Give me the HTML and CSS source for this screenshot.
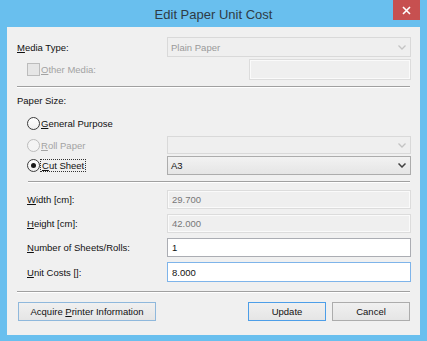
FILE: index.html
```html
<!DOCTYPE html>
<html lang="en">
  <head>
    <meta charset="UTF-8" />
    <title>Edit Paper Unit Cost</title>
    <link rel="stylesheet" href="styles.css">
  </head>
  <body>
    <div class="window">
      <div class="titlebar">
        <span class="title">Edit Paper Unit Cost</span>
        <div class="close">
          <svg width="9" height="9" viewBox="0 0 9 9"><path d="M1 1L8 8M8 1L1 8" stroke="#fff" stroke-width="1.6"/></svg>
        </div>
      </div>
      <div class="client">
        <div class="row r-media">
          <span class="label"><u>M</u>edia Type:</span>
          <div class="combo disabled"><span>Plain Paper</span>
            <svg class="chev" width="8" height="5" viewBox="0 0 8 5"><path d="M0.5 0.5L4 4L7.5 0.5" fill="none" stroke="#c4c4c4" stroke-width="1.3"/></svg>
          </div>
        </div>
        <div class="row r-other">
          <span class="label indent dim"><i class="check"></i><u>O</u>ther Media:</span>
          <div class="box disabled wide-off"></div>
        </div>
        <div class="sep"></div>
        <div class="section">Paper Size:</div>
        <div class="row r-gen">
          <span class="label indent"><i class="radio"></i><u>G</u>eneral Purpose</span>
        </div>
        <div class="row r-roll">
          <span class="label indent dim"><i class="radio off"></i><u>R</u>oll Paper</span>
          <div class="combo disabled"><span></span>
            <svg class="chev" width="8" height="5" viewBox="0 0 8 5"><path d="M0.5 0.5L4 4L7.5 0.5" fill="none" stroke="#c4c4c4" stroke-width="1.3"/></svg>
          </div>
        </div>
        <div class="row r-cut">
          <span class="label indent"><i class="radio on"></i><span class="focus"><u>C</u>ut Sheet</span></span>
          <div class="combo"><span>A3</span>
            <svg class="chev" width="8" height="5" viewBox="0 0 8 5"><path d="M0.5 0.5L4 4L7.5 0.5" fill="none" stroke="#404040" stroke-width="1.5"/></svg>
          </div>
        </div>
        <div class="sep indent-sep"></div>
        <div class="row r-first">
          <span class="label indent"><u>W</u>idth [cm]:</span>
          <div class="box disabled">29.700</div>
        </div>
        <div class="row">
          <span class="label indent"><u>H</u>eight [cm]:</span>
          <div class="box disabled">42.000</div>
        </div>
        <div class="row">
          <span class="label indent"><u>N</u>umber of Sheets/Rolls:</span>
          <div class="box">1</div>
        </div>
        <div class="row r-unit">
          <span class="label indent"><u>U</u>nit Costs []:</span>
          <div class="box focused">8.000</div>
        </div>
        <div class="sep sep-bottom"></div>
        <div class="buttons">
          <button class="btn acquire">Acquire <u>P</u>rinter Information</button>
          <span class="spacer"></span>
          <button class="btn default">Update</button>
          <button class="btn">Cancel</button>
        </div>
      </div>
    </div>
  </body>
</html>
```

FILE: styles.css
```css
* {
  margin: 0;
  padding: 0;
  box-sizing: border-box;
}
body {
  width: 427px;
  height: 341px;
  overflow: hidden;
  font-family: "Liberation Sans", Arial, sans-serif;
}
.window {
  width: 427px;
  height: 341px;
  background: #69bfee;
  display: flex;
  flex-direction: column;
  padding: 0 7px 6px;
}
.titlebar {
  height: 27px;
  position: relative;
  display: flex;
  justify-content: center;
  align-items: center;
}
.title {
  font-size: 13px;
  color: #2f3b45;
  margin-top: 1px;
}
.close {
  position: absolute;
  right: 0;
  top: 0;
  width: 27px;
  height: 20px;
  background: #c75050;
  display: flex;
  align-items: center;
  justify-content: center;
}
.client {
  flex: 1;
  background: #f0f0f0;
  padding: 10px 9px 0 10px;
  font-size: 9.5px;
  color: #111;
  display: flex;
  flex-direction: column;
}
.row {
  display: grid;
  grid-template-columns: 150px 244px;
  align-items: center;
  height: 19px;
  margin-top: 5px;
}
.r-media {
  height: 20px;
  margin-top: 0;
}
.r-other {
  height: 21px;
  margin-top: 2px;
}
.r-gen {
  height: 14px;
  margin-top: 8px;
}
.r-roll {
  height: 18px;
  margin-top: 6px;
}
.r-cut {
  margin-top: 2px;
}
.r-first {
  margin-top: 7px;
}
.r-unit {
  height: 20px;
}
.label {
  display: flex;
  align-items: center;
  white-space: nowrap;
}
.label u {
  text-decoration-thickness: 1px;
  text-underline-offset: 1px;
}
.indent {
  padding-left: 10px;
}
.dim {
  color: #a3a3a3;
}
.section {
  height: 14px;
  line-height: 14px;
  margin-top: 6px;
}
.sep {
  height: 2px;
  border-top: 1px solid #a0a0a0;
  border-bottom: 1px solid #fff;
  margin-top: 6px;
  width: 393px;
}
.indent-sep {
  margin-left: 11px;
  width: 382px;
}
.sep-bottom {
  margin-top: 9px;
}
.check {
  width: 13px;
  height: 13px;
  border: 1px solid #bcbcbc;
  background: #e6e6e6;
  margin-right: 1px;
}
.radio {
  width: 13px;
  height: 13px;
  border-radius: 50%;
  border: 1px solid #3c3c3c;
  background: linear-gradient(#fff, #f0f0f0);
  margin-right: 1px;
  display: flex;
  align-items: center;
  justify-content: center;
}
.radio.off {
  border-color: #bcbcbc;
  background: #f4f4f4;
}
.radio.on::after {
  content: "";
  width: 5px;
  height: 5px;
  border-radius: 50%;
  background: #1a1a1a;
}
.focus {
  outline: 1px dotted #333;
  outline-offset: 0;
  padding: 0 1px;
}
.combo {
  height: 100%;
  border: 1px solid #acacac;
  background: linear-gradient(#f2f2f2, #e5e5e5);
  display: flex;
  align-items: center;
  justify-content: space-between;
  padding: 0 4px 0 3px;
}
.combo.disabled {
  border-color: #d9d9d9;
  background: #efefef;
  color: #9a9a9a;
}
.box {
  height: 100%;
  border: 1px solid #abadb3;
  background: #fff;
  display: flex;
  align-items: center;
  padding-left: 4px;
}
.box.disabled {
  border-color: #dcdcdc;
  box-shadow: inset 0 0 0 1px #fafafa;
  background: #efefef;
  color: #777;
}
.wide-off {
  margin-left: 82px;
  width: 162px;
}
.focused {
  border-color: #7eb4ea;
}
.buttons {
  display: flex;
  margin-top: 9px;
  height: 19px;
  padding: 0 1px;
}
.spacer {
  flex: 1;
}
.btn {
  font-family: inherit;
  font-size: 9.5px;
  color: #111;
  width: 78px;
  height: 19px;
  border: 1px solid #acacac;
  background: linear-gradient(#f0f0f0, #e5e5e5);
  margin-left: 6px;
}
.btn.acquire {
  width: 138px;
  margin-left: 0;
  border-color: #8fb8dc;
}
.btn.default {
  border-color: #4d9ee8;
}
```
